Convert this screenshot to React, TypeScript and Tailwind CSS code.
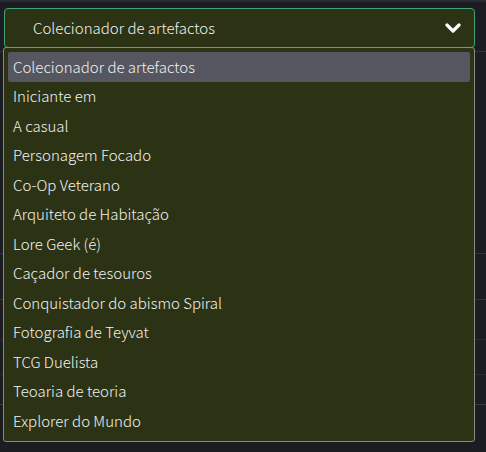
import React from "react";

const options = [
  "Colecionador de artefactos",
  "Iniciante em",
  "A casual",
  "Personagem Focado",
  "Co-Op Veterano",
  "Arquiteto de Habitação",
  "Lore Geek (é)",
  "Caçador de tesouros",
  "Conquistador do abismo Spiral",
  "Fotografia de Teyvat",
  "TCG Duelista",
  "Teoaria de teoria",
  "Explorer do Mundo",
];

export default function App() {
  return (
    <div
      className="relative w-[486px] h-[452px] overflow-hidden bg-[#1c1d22] text-[#f2f2f2]"
      style={{ fontFamily: '"Noto Sans CJK JP", "Noto Sans", sans-serif' }}
    >
      <div className="h-[2px] bg-[#2a2b30]" />
      {/* faint rows behind the menu */}
      <div className="flex flex-col">
        <div className="h-[50px] border-b border-[#34353a]" />
        <div className="h-[202px] border-b border-[#34353a]" />
        <div className="h-[46px] border-b border-[#34353a]" />
        <div className="h-[40px] border-b border-[#2c2d33]" />
        <div className="h-[35px] border-b border-[#2c2d33]" />
        <div className="h-[30px] border-b border-[#3a3b40]" />
      </div>

      <div className="absolute left-[4px] top-[8px] w-[471px] h-[40px] rounded-[4px] border border-[#45a274] bg-[#2b3314] flex items-center pl-[28px] pr-[12px]">
        <span className="flex-1 text-[15px] font-light">Colecionador de artefactos</span>
        <svg width="16" height="12" viewBox="0 0 16 12" className="mr-[1px]">
          <path d="M2 3 L8 9 L14 3" fill="none" stroke="#ffffff" strokeWidth="3.2" strokeLinecap="round" strokeLinejoin="round" />
        </svg>
      </div>

      <div className="absolute left-[3px] top-[47px] w-[472px] h-[395px] rounded-[3px] border border-[#8a8a86] bg-[#2b3314] px-[4px] pt-[4px]">
        {options.map((o, i) => (
          <div
            key={o}
            className={
              i === 0
                ? "h-[29.5px] flex items-center px-[5px] rounded-[2px] bg-[#55565f] text-[15px] font-light"
                : "h-[29.5px] flex items-center px-[5px] text-[15px] font-light"
            }
          >
            {o}
          </div>
        ))}
      </div>
    </div>
  );
}
